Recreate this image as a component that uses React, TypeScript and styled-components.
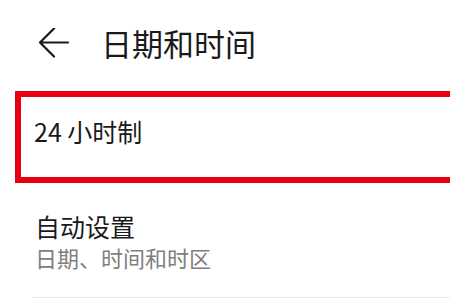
import React from "react";
import styled, { createGlobalStyle } from "styled-components";

const Global = createGlobalStyle`
  html, body { margin: 0; padding: 0; background: #ffffff; }
  body { font-family: "Noto Sans CJK SC", "Noto Sans", sans-serif; }
`;

const Page = styled.div`
  width: 450px;
  height: 300px;
  overflow: hidden;
  background: #ffffff;
  display: flex;
  flex-direction: column;
`;

const Header = styled.div`
  height: 91px;
  display: flex;
  align-items: center;
  padding: 0 0 0 38px;
  box-sizing: border-box;
  gap: 31px;
`;

const BackButton = styled.div`
  width: 32px;
  height: 32px;
  display: flex;
  align-items: center;
  justify-content: center;
  margin-top: -4px;
`;

const Title = styled.div`
  font-size: 31px;
  color: #1a1a1a;
  line-height: 1;
  margin-top: -6px;
`;

const HighlightRow = styled.div`
  margin-left: 15px;
  margin-right: -10px;
  height: 92px;
  border: 6px solid #e60012;
  box-sizing: border-box;
  display: flex;
  align-items: center;
  padding-left: 13px;
  padding-bottom: 12px;
`;

const RowLabel = styled.div<{ $size?: number }>`
  font-size: ${(p) => p.$size ?? 25}px;
  color: #1a1a1a;
  line-height: 1.2;
`;

const Row = styled.div`
  display: flex;
  flex-direction: column;
  padding: 28px 0 0 3px;
  margin-left: 32px;
  height: 115px;
  box-sizing: border-box;
  border-bottom: 1px solid #ececec;
`;

const SubLabel = styled.div`
  font-size: 22px;
  color: #808080;
  line-height: 1.2;
  margin-top: 3px;
`;

export default function App() {
  return (
    <>
      <Global />
      <Page>
        <Header>
          <BackButton>
            <svg width="32" height="32" viewBox="0 0 32 32" fill="none">
              <path
                d="M30 14.5H2M16 0.5L2 14.5L16 28.5"
                stroke="#1a1a1a"
                strokeWidth="2.2"
                strokeLinecap="round"
                strokeLinejoin="round"
              />
            </svg>
          </BackButton>
          <Title>日期和时间</Title>
        </Header>
        <HighlightRow>
          <RowLabel>24 小时制</RowLabel>
        </HighlightRow>
        <Row>
          <RowLabel>自动设置</RowLabel>
          <SubLabel>日期、时间和时区</SubLabel>
        </Row>
      </Page>
    </>
  );
}
